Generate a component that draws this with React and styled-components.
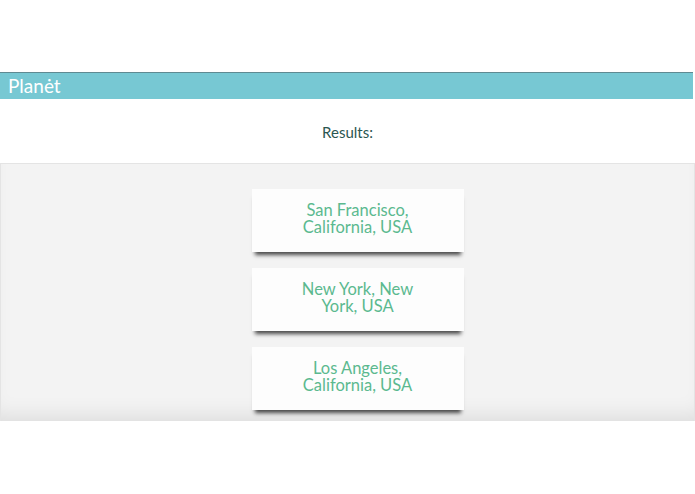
import styled, { createGlobalStyle } from "styled-components";

const GlobalStyle = createGlobalStyle`
  html, body {
    margin: 0;
    padding: 0;
    background: #fff;
    font-family: Lato, "Open Sans", sans-serif;
  }
`;

const places = [
  "San Francisco, California, USA",
  "New York, New York, USA",
  "Los Angeles, California, USA",
];

export default function App() {
  return (
    <>
      <GlobalStyle />
      <Page>
        <Header>
          <Brand>Planėt</Brand>
        </Header>
        <Title>Results:</Title>
        <Panel>
          {places.map((p) => (
            <Card key={p}>
              <CardText>{p}</CardText>
            </Card>
          ))}
        </Panel>
      </Page>
    </>
  );
}

const Page = styled.div`
  width: 695px;
  height: 494px;
  padding-top: 72px;
  box-sizing: border-box;
  display: flex;
  flex-direction: column;
`;

const Header = styled.div`
  height: 26px;
  margin-right: 2px;
  background: #77c8d3;
  border-top: 1px solid #5f8a92;
  display: flex;
  align-items: center;
  padding-left: 8px;
`;

const Brand = styled.span`
  color: #fff;
  font-size: 19px;
  line-height: 1;
  margin-top: -2px;
`;

const Title = styled.div`
  height: 64px;
  display: flex;
  align-items: center;
  justify-content: center;
  color: #2b5651;
  font-size: 15px;
  padding-top: 2px;
  box-sizing: border-box;
`;

const Panel = styled.div`
  height: 258px;
  box-sizing: border-box;
  background: #f3f3f3;
  border: 1px solid #e4e4e4;
  border-bottom: none;
  box-shadow: inset 0 -18px 22px -14px rgba(0, 0, 0, 0.1);
  display: flex;
  flex-direction: column;
  align-items: center;
  padding-top: 25px;
  padding-left: 20px;
  gap: 16px;
`;

const Card = styled.div`
  width: 212px;
  height: 63px;
  flex-shrink: 0;
  background: #fdfdfd;
  box-shadow: 0 6px 4px -3px rgba(0, 0, 0, 0.7);
  display: flex;
  align-items: center;
  justify-content: center;
  padding-bottom: 4px;
  box-sizing: border-box;
`;

const CardText = styled.div`
  width: 130px;
  text-align: center;
  color: #5bb98f;
  font-size: 16.5px;
  line-height: 17px;
`;
